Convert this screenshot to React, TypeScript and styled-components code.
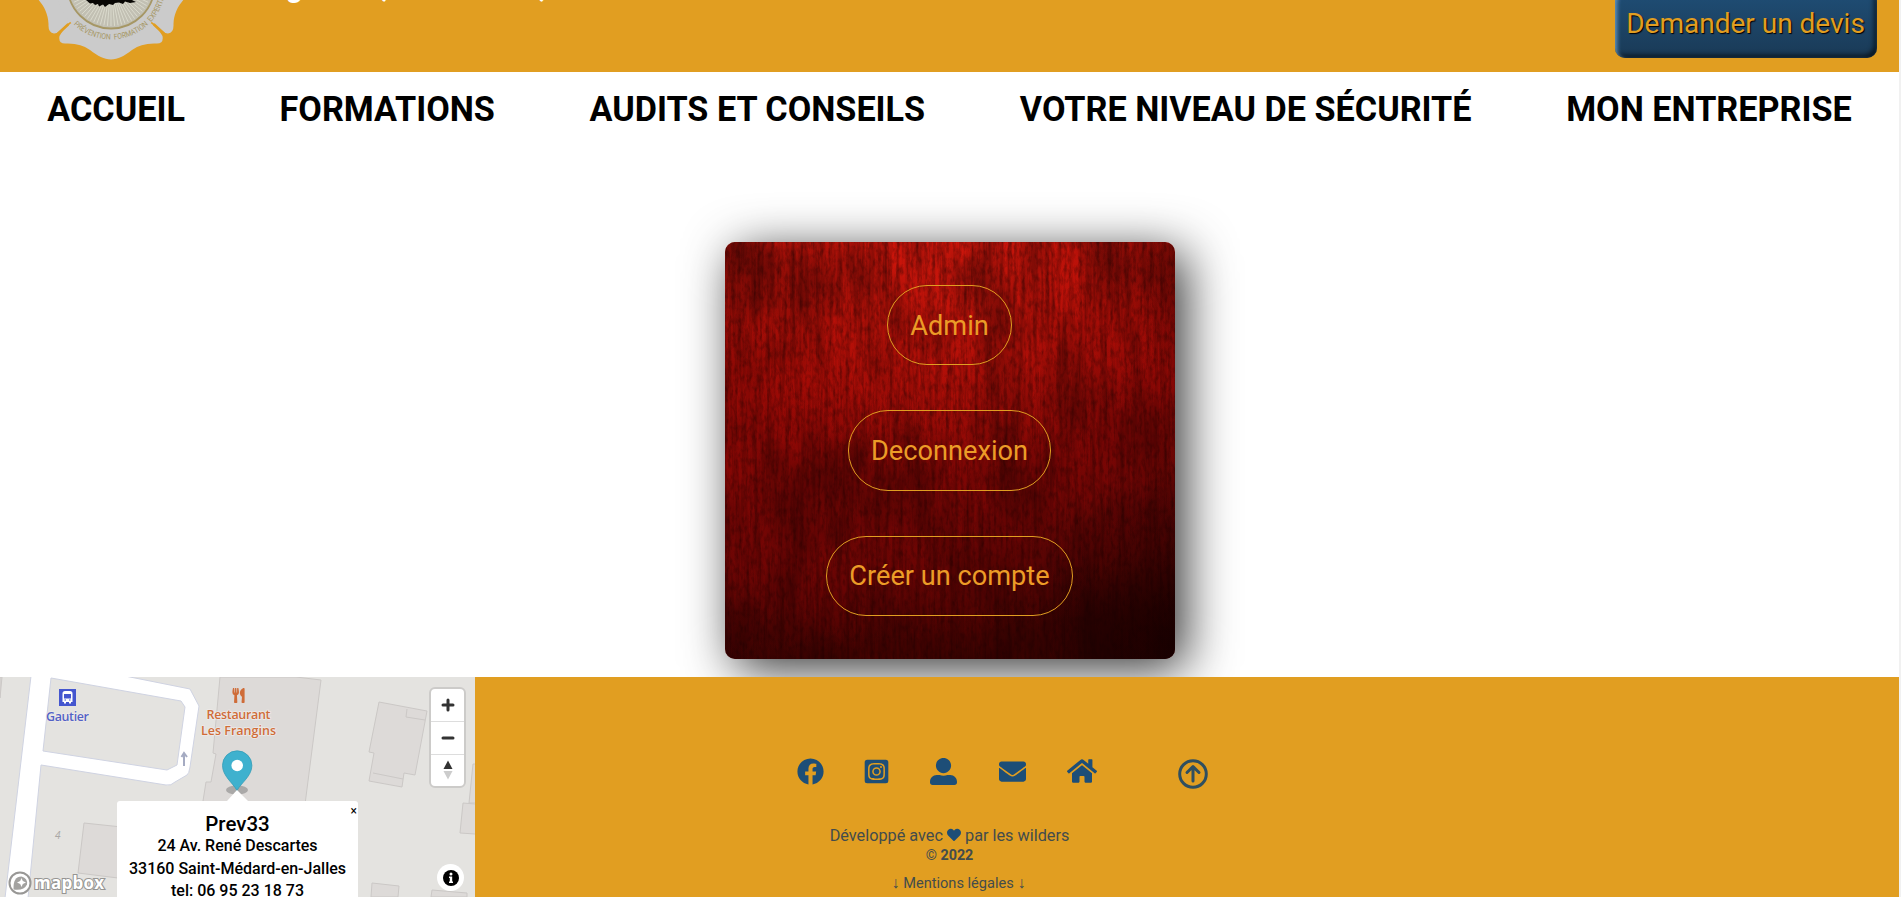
import React from 'react';
import styled, { createGlobalStyle } from 'styled-components';
import { FaFacebook, FaInstagramSquare, FaUserAlt, FaEnvelope, FaHome, FaHeart, FaUtensils } from 'react-icons/fa';

const NAVY = '#1d4e77';
const GOLD = '#e19e21';

const GlobalStyle = createGlobalStyle`
  * { box-sizing: border-box; }
  html, body { margin: 0; padding: 0; height: 100%; overflow: hidden; background: #f1f1f1; }
  body { font-family: Roboto, "Liberation Sans", sans-serif; color: #000; }
  p, h3 { margin: 0; }
`;

const Page = styled.div`
  width: calc(100vw - 2px);
  height: 897px;
  overflow: hidden;
  display: flex;
  flex-direction: column;
  background: #fff;
`;

const Header = styled.header`
  height: 72px;
  flex: none;
  background: ${GOLD};
  display: flex;
  align-items: flex-end;
  justify-content: space-between;
  padding: 0 22px 0 30px;
`;

const Brand = styled.div`
  display: flex;
  align-items: flex-end;
  height: 72px;
`;

const Slogan = styled.p`
  align-self: flex-start;
  margin: -32px 0 0 69px;
  font-size: 29.4px;
  line-height: 38px;
  font-weight: 700;
  color: #fff;
  white-space: pre;
`;

const QuoteButton = styled.button`
  width: 262px;
  height: 68px;
  margin-bottom: 14px;
  border: 0;
  border-radius: 10px;
  padding: 0 1px 2px 0;
  font: 400 28px/33px Roboto, sans-serif;
  color: ${GOLD};
  text-shadow: 1px 1px 1px #000;
  white-space: nowrap;
  background: linear-gradient(#1f4e76, #1a3a56);
  box-shadow: inset 2px 2px 4px rgba(120, 175, 220, 0.8), inset -3px -3px 5px rgba(0, 0, 0, 0.65);
`;

const Nav = styled.nav`
  height: 75px;
  flex: none;
  display: flex;
  justify-content: space-around;
  align-items: center;
  padding-bottom: 1px;
`;

const NavLink = styled.a`
  font-size: 34.2px;
  font-weight: 700;
  white-space: nowrap;
`;

const Main = styled.main`
  flex: 1;
  display: flex;
  justify-content: center;
  align-items: flex-start;
  padding-top: 95px;
`;

const Card = styled.section`
  position: relative;
  width: 450px;
  height: 417px;
  border-radius: 10px;
  padding: 43px 0;
  display: flex;
  flex-direction: column;
  align-items: center;
  justify-content: space-between;
  box-shadow: 10px 10px 50px rgba(0, 0, 0, 0.8);
  isolation: isolate;
`;

const WoodSvg = styled.svg`
  position: absolute;
  inset: 0;
  border-radius: 10px;
  z-index: -1;
`;

const PillButton = styled.button`
  height: 80.4px;
  padding: 1px 22px 0;
  border: 1px solid ${GOLD};
  border-radius: 40px;
  background: transparent;
  color: #ec9c27;
  font: 400 27.2px/32px Roboto, sans-serif;
`;

const Footer = styled.footer`
  position: relative;
  height: 220px;
  flex: none;
  display: grid;
  grid-template-columns: 475px 949px 475px;
  background: ${GOLD};
`;

const MapBox = styled.div`
  position: relative;
  height: 220px;
  overflow: hidden;
  background: #e4e3e0;
`;

const MapSvg = styled.svg`
  display: block;
`;

const Popup = styled.div`
  position: absolute;
  left: 117px;
  top: 124px;
  width: 241px;
  height: 110px;
  padding-top: 11px;
  border-radius: 3px;
  background: #fff;
  text-align: center;
  font-size: 16px;
  font-weight: 500;
  line-height: 22.6px;
`;

const PopupTitle = styled.h3`
  font-size: 20.500px;
  font-weight: 500;
  line-height: 24px;
  margin-bottom: -1px;
`;

const PopupClose = styled.span`
  position: absolute;
  right: 1px;
  top: 0;
  font-size: 12px;
  font-weight: 400;
  line-height: 20px;
`;

const Controls = styled.div`
  position: absolute;
  left: 429px;
  top: 10px;
  width: 37px;
  border: 2px solid #cccbc9;
  border-radius: 6px;
  overflow: hidden;
  background: #fff;
`;

const Control = styled.div`
  height: 32.300px;
  display: grid;
  place-items: center;
  & + & { border-top: 1px solid #ddd; }
`;

const Info = styled.div`
  position: absolute;
  left: 437px;
  top: 187px;
  width: 27px;
  height: 27px;
  border-radius: 50%;
  background: #fff;
  display: grid;
  place-items: center;
`;

const FooterBody = styled.div`
  display: flex;
  flex-direction: column;
  align-items: center;
  color: #434c4c;
`;

const Socials = styled.div`
  display: flex;
  align-items: center;
  height: 30px;
  margin: 79px 0 0 106px;
  color: ${NAVY};
`;

const Social = styled.span<{ $gap?: number }>`
  display: flex;
  margin-right: ${(p) => p.$gap ?? 0}px;
`;

const BackToTop = styled.span`
  display: flex;
  padding-top: 5px;
`;

const Credit = styled.p`
  margin-top: 40px;
  font-size: 16.25px;
  line-height: 20px;
  svg { color: ${NAVY}; vertical-align: -1px; }
`;

const Copyright = styled.p`
  font-size: 14.3px;
  line-height: 19px;
  b { font-weight: 700; }
`;

const Legal = styled.p`
  margin: 8px 0 0 18px;
  font-size: 14.6px;
  line-height: 20px;
`;

const Arrow = styled.span`
  font-family: "Liberation Serif", serif;
  font-size: 16px;
  line-height: 0;
`;

const rays = Array.from({ length: 72 }, (_, i) => (i * Math.PI) / 36);

const Logo = () => (
  <svg width="160" height="72" viewBox="30 0 160 72">
    <defs>
      <path id="motto" d="M73.500 24.500A54.500 54.500 0 0 0 165.500 -15" />
    </defs>
    <g fill="#cbcbcb">
      <path d="M37 -2C44 6 48 13 48.500 24Q48 33 54 33.500L57 33L69 23L90 0V-2Z" />
      <path d="M185 -2C178 6 174 13 173.500 24Q174 33 168 33.500L165 33L153 23L132 0V-2Z" />
      <path d="M70 24Q62 31 59.500 36Q58 44 66 43.500Q81 43 90 50C98 56 104 59.500 111 59.500S124 56 132 50Q141 43 156 43.500Q164 44 162.500 36Q160 31 152 24L111 -3Z" />
      <circle cx="111" cy="-15" r="55" />
    </g>
    <path d="M56.500 35L68 24.500M165.500 35L154 24.500" stroke={GOLD} strokeWidth="2.500" strokeLinecap="round" />
    <circle cx="111" cy="-15" r="43.500" fill="#c2c0b3" stroke="#a69765" strokeWidth="1.800" />
    {rays.map((a) => (
      <line key={a} x1={111 + 10 * Math.cos(a)} y1={-15 + 10 * Math.sin(a)} x2={111 + 41 * Math.cos(a)} y2={-15 + 41 * Math.sin(a)} stroke="#dcdccf" strokeWidth="0.9" />
    ))}
    <path d="M86 0L90 3.500L93 3L95 5L98 4L99 6.500L103 4.500L105 7L109 4L113 5L115 3L119 2.500L123 4L125 1.500L130 3L136 2L132 0V-2H86Z" fill="#080704" />
    <text fontFamily="Roboto" fontSize="7.800" fill="#a69765">
      <textPath href="#motto" textLength="120" lengthAdjust="spacingAndGlyphs">PRÉVENTION&#160; FORMATION&#160; EXPERTISE</textPath>
    </text>
  </svg>
);

const Wood = () => (
  <WoodSvg width="450" height="417">
    <defs>
      <linearGradient id="base" x1="0" y1="0" x2="0.15" y2="1">
        <stop offset="0" stopColor="#b31008" />
        <stop offset="0.3" stopColor="#9e0a05" />
        <stop offset="0.6" stopColor="#800604" />
        <stop offset="0.85" stopColor="#680403" />
        <stop offset="1" stopColor="#480201" />
      </linearGradient>
      <radialGradient id="glow" cx="0.5" cy="0.02" r="0.55">
        <stop offset="0" stopColor="#d8180c" stopOpacity="0.85" />
        <stop offset="1" stopColor="#d8170b" stopOpacity="0" />
      </radialGradient>
      <radialGradient id="corner" cx="1" cy="0.96" r="0.42">
        <stop offset="0" stopColor="#120000" stopOpacity="0.75" />
        <stop offset="1" stopColor="#120000" stopOpacity="0" />
      </radialGradient>
      <radialGradient id="edge" cx="0.44" cy="0.42" r="0.75">
        <stop offset="0.7" stopColor="#150000" stopOpacity="0" />
        <stop offset="1" stopColor="#150000" stopOpacity="0.35" />
      </radialGradient>
      <filter id="grain" x="0" y="0" width="100%" height="100%" colorInterpolationFilters="sRGB">
        <feTurbulence type="fractalNoise" baseFrequency="0.24 0.012" numOctaves="4" seed="7" />
        <feColorMatrix values="0 0 0 0 0.1  0 0 0 0 0  0 0 0 0 0  0.85 0 0 0 -0.33" />
      </filter>
      <filter id="speck" x="0" y="0" width="100%" height="100%" colorInterpolationFilters="sRGB">
        <feTurbulence type="fractalNoise" baseFrequency="0.28 0.12" numOctaves="3" seed="3" />
        <feColorMatrix values="0 0 0 0 0.1  0 0 0 0 0  0 0 0 0 0  0.8 0 0 0 -0.33" />
      </filter>
      <filter id="cloud" x="0" y="0" width="100%" height="100%" colorInterpolationFilters="sRGB">
        <feTurbulence type="fractalNoise" baseFrequency="0.02 0.01" numOctaves="4" seed="5" />
        <feColorMatrix values="0 0 0 0 0.1  0 0 0 0 0  0 0 0 0 0  0.9 0 0 0 -0.35" />
      </filter>
    </defs>
    <rect width="450" height="417" fill="url(#base)" />
    <rect width="450" height="417" fill="url(#glow)" />
    <rect width="450" height="417" filter="url(#cloud)" />
    <rect width="450" height="417" filter="url(#grain)" />
    <rect width="450" height="417" filter="url(#speck)" />
    <rect width="450" height="417" fill="url(#edge)" />
    <rect width="450" height="417" fill="url(#corner)" />
  </WoodSvg>
);

const MapDrawing = () => (
  <MapSvg width="475" height="220" viewBox="0 677 475 220">
    <rect y="677" width="475" height="220" fill="#e4e3e0" />
    <g fill="#dddad8" stroke="#cbc8c6" strokeWidth="1">
      <path d="M220 677L213 753L216 754L211 782L206 782L203 801V820H303L321 680L296 677Z" />
      <path d="M379 702L427 711L415 775L404 773L402 787L369 781L374 753L369 752Z" />
      <path d="M407 709L406 717L425 720M373 773L403 779" fill="none" />
      <path d="M84 823L150 830V882L78 873Z" />
      <path d="M475 764H473L469 803H475M475 804L463 803L460 833L475 834" />
      <path d="M372 883L399 886L398 897H371ZM432 890L467 893V897H431Z" />
      <path d="M0 677H2L0 698Z" />
    </g>
    <path d="M31 676L5 898H28L41 765L166 785Q171 786 175 782L187 775Q189 774 190 767L199 706L190 689L125 676Z" fill="#fff" stroke="#cfd3e2" />
    <path d="M51 678L181 701L185 707L177 765L167 770L43 751Z" fill="#e4e3e0" stroke="#cfd3e2" />
    <path d="M184 766V754M181.500 757L184 753L187 757" fill="none" stroke="#a5abc2" strokeWidth="2" />
    <rect x="59" y="689" width="17" height="17" fill="#4456cf" />
    <path d="M62.500 693.500Q62.500 691 65 691H70Q72.500 691 72.500 693.500V702H71V703.500H69V702H66V703.500H64V702H62.500Z" fill="#fff" />
    <path d="M64 694H71V698.500H64Z" fill="#4456cf" />
    <path d="M64.500 700H66M69 700H70.500" stroke="#4456cf" />
    <g fontFamily="Open Sans" fontWeight="600" textAnchor="middle" stroke="#eeeae8" strokeWidth="1.500" paintOrder="stroke">
      <text x="67.500" y="720.500" fontSize="12.500" fill="#5362c6" textLength="43">Gautier</text>
      <text x="238.500" y="718.500" fontSize="12.500" fill="#cf6c38" textLength="64">Restaurant</text>
      <text x="238.500" y="735" fontSize="12.500" fill="#cf6c38" textLength="75">Les Frangins</text>
    </g>
    <text x="55" y="839" fontFamily="Open Sans" fontStyle="italic" fontSize="10" fill="#aaa8a6">4</text>
    <g transform="translate(231 688)" color="#cf6c38"><FaUtensils size={15} /></g>
    <ellipse cx="237" cy="790" rx="11" ry="4.500" fill="#777" opacity="0.5" />
    <path d="M237 790.500C233 783 222.500 776 222.500 765.500A14.700 14.700 0 0 1 251.900 765.500C251.900 776 241 783 237 790.500Z" fill="#3fb1ce" stroke="#359db8" strokeWidth="0.800" />
    <circle cx="237.200" cy="765.500" r="5.800" fill="#fff" />
    <path d="M227 801L237 790L248 801Z" fill="#fff" />
    <circle cx="20" cy="883" r="10.500" fill="#fff" stroke="#989795" strokeWidth="2" />
    <path d="M13.500 889.500Q13 876.500 21.500 876.500Q28 878.500 27 884.500Q24 891 13.500 889.500Z" fill="#a3a2a0" />
    <path d="M21.500 878L22.800 881L26 882.500L22.800 884L21.500 887L20.200 884L17 882.500L20.200 881Z" fill="#fff" />
    <text x="34" y="888.500" fontFamily="Open Sans" fontWeight="700" fontSize="17" fill="#fff" stroke="#969593" strokeWidth="2.200" paintOrder="stroke" textLength="70">mapbox</text>
  </MapSvg>
);

const ArrowUp = () => (
  <svg width="30" height="30" viewBox="0 0 30 30" fill="none" stroke="#2f4f60" strokeWidth="3" strokeLinecap="round" strokeLinejoin="round">
    <circle cx="15" cy="15" r="13.300" />
    <path d="M15 22V8M9 13.500L15 7.500L21 13.500" />
  </svg>
);

export default function App() {
  return (
    <>
      <GlobalStyle />
      <Page>
        <Header>
          <Brand>
            <Logo />
            <Slogan>Vigilance, Prévention, Formation</Slogan>
          </Brand>
          <QuoteButton>Demander un devis</QuoteButton>
        </Header>
        <Nav>
          {['ACCUEIL', 'FORMATIONS', 'AUDITS ET CONSEILS', 'VOTRE NIVEAU DE SÉCURITÉ', 'MON ENTREPRISE'].map((t) => (
            <NavLink key={t}>{t}</NavLink>
          ))}
        </Nav>
        <Main>
          <Card>
            <Wood />
            <PillButton>Admin</PillButton>
            <PillButton>Deconnexion</PillButton>
            <PillButton>Créer un compte</PillButton>
          </Card>
        </Main>
        <Footer>
          <MapBox>
            <MapDrawing />
            <Popup>
              <PopupClose>×</PopupClose>
              <PopupTitle>Prev33</PopupTitle>
              <p>24 Av. René Descartes</p>
              <p>33160 Saint-Médard-en-Jalles</p>
              <p>tel: 06 95 23 18 73</p>
            </Popup>
            <Controls>
              <Control>
                <svg width="14" height="14" stroke="#333" strokeWidth="3" strokeLinecap="round"><path d="M7 2V12M2 7H12" /></svg>
              </Control>
              <Control>
                <svg width="14" height="14" stroke="#333" strokeWidth="3" strokeLinecap="round"><path d="M2 7H12" /></svg>
              </Control>
              <Control>
                <svg width="10" height="20"><path d="M0.500 9L5 0.500L9.500 9Z" fill="#333" /><path d="M0.500 11L5 19.500L9.500 11Z" fill="#ccc" /></svg>
              </Control>
            </Controls>
            <Info>
              <svg width="16" height="16"><circle cx="8" cy="8" r="8" /><path d="M6 6.500H9.200V11.500H10V13H6V11.500H6.800V8H6Z" fill="#fff" /><circle cx="8" cy="4" r="1.500" fill="#fff" /></svg>
            </Info>
          </MapBox>
          <FooterBody>
            <Socials>
              <Social $gap={38.5}><FaFacebook size={27} /></Social>
              <Social $gap={40.5}><FaInstagramSquare size={27} /></Social>
              <Social $gap={42}><FaUserAlt size={27} /></Social>
              <Social $gap={41}><FaEnvelope size={27} /></Social>
              <Social $gap={81}><FaHome size={30} /></Social>
              <BackToTop><ArrowUp /></BackToTop>
            </Socials>
            <Credit>Développé avec <FaHeart size={14} /> par les wilders</Credit>
            <Copyright>© <b>2022</b></Copyright>
            <Legal><Arrow>↓</Arrow> Mentions légales <Arrow>↓</Arrow></Legal>
          </FooterBody>
        </Footer>
      </Page>
    </>
  );
}
